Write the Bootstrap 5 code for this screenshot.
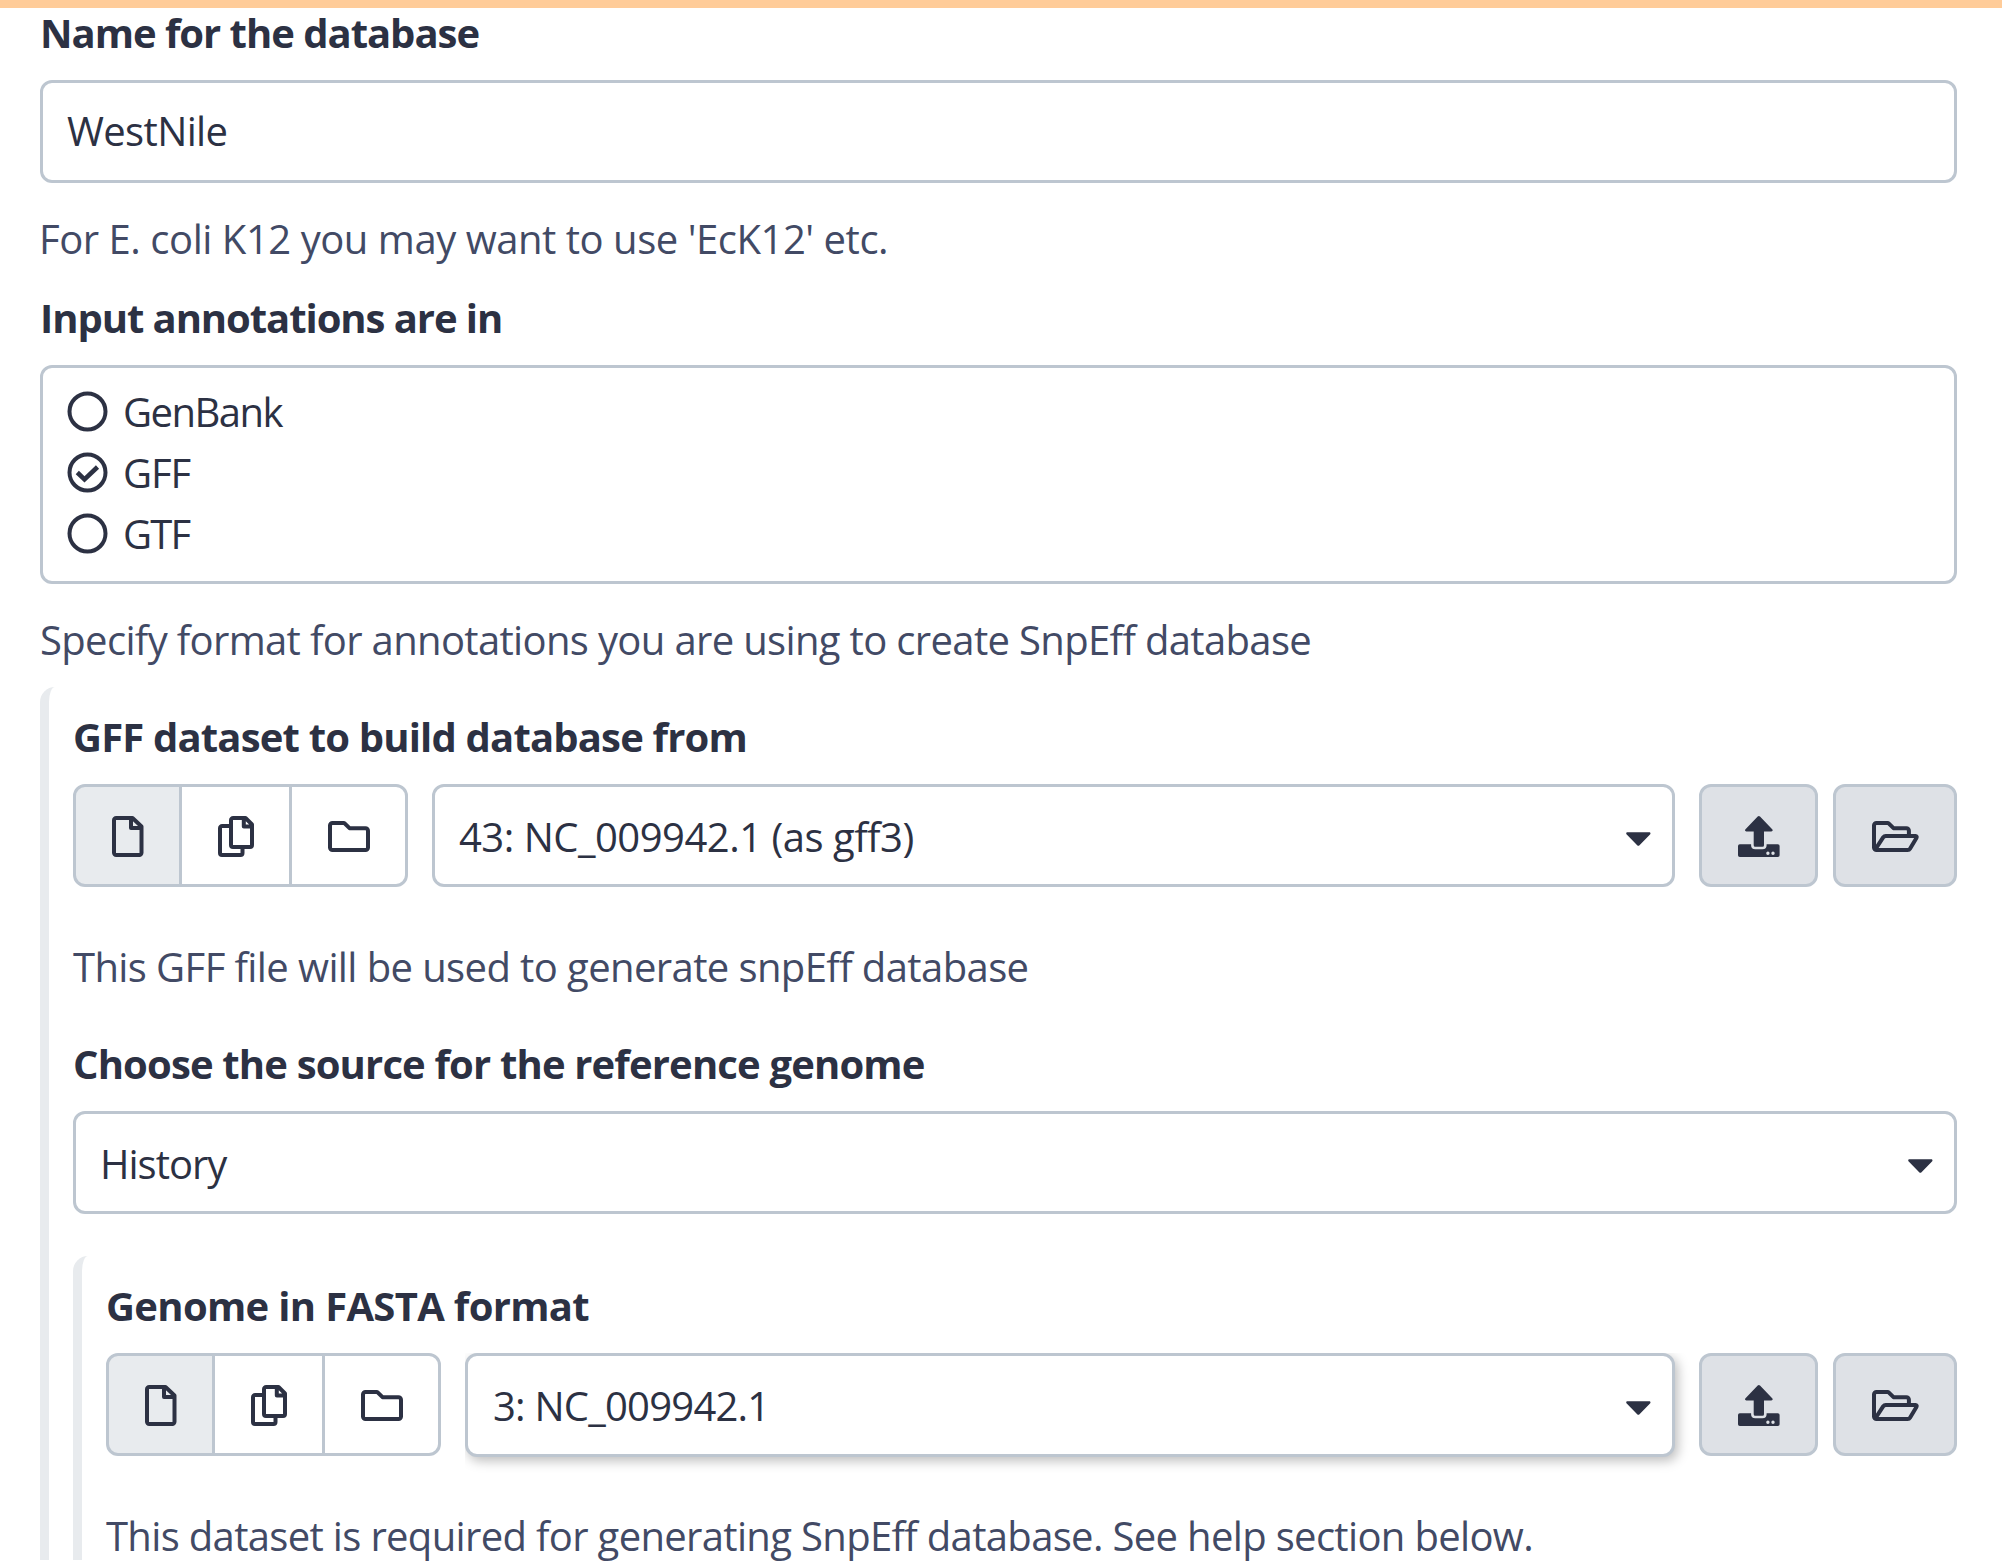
<!DOCTYPE html>
<html lang="en">
<head>
<meta charset="utf-8">
<title>SnpEff build</title>
<link rel="stylesheet" href="https://cdn.jsdelivr.net/npm/bootstrap@5.3.0/dist/css/bootstrap.min.css">
<style>
  body { font-family: "Open Sans", "Noto Sans", sans-serif; font-size: 40px; line-height: 48px; color: #2c3143; background: #fff; height: 1561px; overflow: hidden; }
  .top-strip { height: 8px; background: #ffcc99; }
  .tool-form { padding: 0 45px 0 40px; }
  .field-title { font-weight: 700; height: 48px; padding-top: 1px; white-space: nowrap; margin-bottom: 24px; }
  .field-help { color: #424a65; height: 48px; padding-top: 1px; white-space: nowrap; }
  .box { border: 3px solid #bdc6d0; border-radius: 12px; background: #fff; color: #2c3143; }
  .form-control.box { height: 103px; font-size: 40px; line-height: 48px; padding: 0 24px 3px; }
  .pick { height: 103px; padding: 0 21px 0 24px; white-space: nowrap; }
  .pick svg { margin-top: 7px; }
  .pick span { padding-top: 2px; }
  .pick-raised { height: 104px; padding-left: 25px; box-shadow: 3px 4px 12px rgba(0,0,0,.26); clip-path: inset(0 -23px -26px 0); }
  .pick-raised svg { margin-top: 5px; }
  .radio-box { height: 219px; padding: 13px 24px; }
  .radio-line { height: 61px; gap: 15px; }
  .nest { border-left: 9px solid #e8ebee; border-radius: 15px 0 0 0; padding: 25px 0 0 24px; }
  .data-row { height: 103px; gap: 24px; }
  .kinds .btn { border: 3px solid #bdc6d0; border-radius: 12px; height: 103px; padding: 2px 0 0; line-height: 1; display: flex; align-items: center; justify-content: center; flex: none; color: #2c3143; }
  .kinds .btn + .btn { margin-left: -3px !important; }
  .kinds .btn.active { background: #e8ebee; border-color: #bdc6d0; z-index: 0; }
  .k1 { width: 109px; } .k2 { width: 113px; } .k3 { width: 119px; }
  .tail { gap: 15px; }
  .tail .btn { border: 3px solid #bdc6d0; border-radius: 12px; background: #dee1e6; height: 103px; padding: 2px 0 0; display: flex; align-items: center; justify-content: center; color: #2c3143; }
  .b-up { width: 119px; } .b-open { width: 124px; }
  svg { display: block; flex: none; }
  .ln { fill: none; stroke: #2c3143; stroke-width: 4; stroke-linejoin: round; }
  .tick { stroke-width: 4.6; stroke-linejoin: miter; }
  .fl { fill: #2c3143; }
  .s-name { letter-spacing: -1.02px; } .s-west { letter-spacing: -.64px; }
  .s-ecoli { letter-spacing: -.46px; margin-left: -1px; } .s-input { letter-spacing: -1.06px; }
  .s-gb { letter-spacing: -1.53px; } .s-gff { letter-spacing: -1.15px; } .s-gtf { letter-spacing: -1.75px; }
  .field-help.s-spec { letter-spacing: -.655px; padding-top: 2px; } .s-gset { letter-spacing: -.82px; } .s-43 { letter-spacing: -.5px; }
  .s-tgff { letter-spacing: -.6px; } .s-src { letter-spacing: -.84px; } .s-hist { letter-spacing: -1px; }
  .s-fasta { letter-spacing: -.67px; } .s-3 { letter-spacing: -.77px; } .s-req { letter-spacing: -.665px; }
  .g25 { margin-top: 25px; } .g31 { margin-top: 31px; } .g30 { margin-top: 30px; } .g42 { margin-top: 42px; } .g49 { margin-top: 49px; } .g55 { margin-top: 55px; }
</style>
<script src="https://cdn.jsdelivr.net/npm/bootstrap@5.3.0/dist/js/bootstrap.bundle.min.js"></script>
</head>
<body>
<svg width="0" height="0" class="position-absolute">
  <symbol id="i-file" viewBox="0 0 32 41"><path class="ln" d="M4.200 2H20.500L29.500 10.500V36.800a2.200 2.200 0 0 1-2.200 2.200H4.200A2.200 2.200 0 0 1 2 36.800V4.200A2.200 2.200 0 0 1 4.200 2ZM19 2V12H29.500"/></symbol>
  <symbol id="i-copy" viewBox="0 0 36 41"><path class="ln" d="M15.200 2H27.500L34 8.500V29a2 2 0 0 1-2 2H15a2 2 0 0 1-2-2V4.200A2.200 2.200 0 0 1 15.200 2ZM25.800 2V10.500H34M13 10H4.200A2.200 2.200 0 0 0 2 12.200V37a2 2 0 0 0 2 2H22.500a2 2 0 0 0 2-2V31"/></symbol>
  <symbol id="i-folder" viewBox="0 0 42 31"><path class="ln" d="M4.500 2H15.500a2 2 0 0 1 1.400.600L21.500 7.200H37.500A2.500 2.500 0 0 1 40 9.700V26.500A2.500 2.500 0 0 1 37.500 29H4.500A2.500 2.500 0 0 1 2 26.500V4.500A2.500 2.500 0 0 1 4.500 2Z"/></symbol>
  <symbol id="i-up" viewBox="0 0 42 41"><path class="fl" d="M19.700.600a1.600 1.600 0 0 1 2.300 0L34.200 13.200c.900 1 .400 2.200-.900 2.200H26V29.200a1.500 1.500 0 0 1-1.500 1.500H17.200a1.500 1.500 0 0 1-1.500-1.500V15.400H8.400c-1.300 0-1.800-1.200-.900-2.200Z"/><path class="fl" fill-rule="evenodd" d="M1.800 28.200H13.100V29.200A4.100 4.100 0 0 0 17.200 33.300H24.500A4.100 4.100 0 0 0 28.600 29.200V28.200H39.800A1.800 1.800 0 0 1 41.600 30V39.200A1.800 1.800 0 0 1 39.800 41H1.800A1.800 1.800 0 0 1 0 39.200V30A1.800 1.800 0 0 1 1.800 28.200ZM28.200 37.300a1.700 1.700 0 1 0 3.400 0a1.700 1.700 0 1 0-3.400 0ZM33.300 37.300a1.700 1.700 0 1 0 3.400 0a1.700 1.700 0 1 0-3.400 0Z"/></symbol>
  <symbol id="i-open" viewBox="0 0 47 31"><path class="ln" d="M3.500 28.200L11.300 16.200Q12.200 15 13.700 15H43.300Q45.400 15.200 44.300 17.200L38 27.700Q37.200 29 35.700 29H4.500A2.500 2.500 0 0 1 2 26.500V4.500A2.500 2.500 0 0 1 4.500 2H15.500a2 2 0 0 1 1.400.600L21.500 7.200H34.400A2.500 2.500 0 0 1 36.900 9.700V15"/></symbol>
  <symbol id="i-caret" viewBox="0 0 25 14"><path class="fl" d="M1.500.3H23.200c1.300 0 1.700 1.300.8 2.200L13.500 13.200a1.600 1.600 0 0 1-2.300 0L.700 2.500C-.200 1.600.200.3 1.500.3Z"/></symbol>
  <symbol id="i-ring" viewBox="0 0 41 41"><circle class="ln" cx="20.500" cy="20.500" r="18"/></symbol>
</svg>

<div class="top-strip"></div>
<main class="tool-form">
  <div class="field-title s-name">Name for the database</div>
  <input type="text" class="form-control box s-west" value="WestNile">
  <div class="field-help g31 s-ecoli">For E. coli K12 you may want to use 'EcK12' etc.</div>

  <div class="field-title g31 s-input">Input annotations are in</div>
  <div class="box radio-box">
    <div class="radio-line d-flex align-items-center"><svg width="41" height="41"><use href="#i-ring"/></svg><span class="s-gb">GenBank</span></div>
    <div class="radio-line d-flex align-items-center"><svg width="41" height="41"><use href="#i-ring"/><path class="ln tick" d="M10.300 20.500L17.500 27.300L30.500 15"/></svg><span class="s-gff">GFF</span></div>
    <div class="radio-line d-flex align-items-center"><svg width="41" height="41"><use href="#i-ring"/></svg><span class="s-gtf">GTF</span></div>
  </div>
  <div class="field-help g30 s-spec">Specify format for annotations you are using to create SnpEff database</div>

  <section class="nest g25">
    <div class="field-title s-gset">GFF dataset to build database from</div>
    <div class="data-row d-flex align-items-start">
      <div class="btn-group kinds">
        <button class="btn active k1"><svg width="32" height="41"><use href="#i-file"/></svg></button>
        <button class="btn k2"><svg width="36" height="41"><use href="#i-copy"/></svg></button>
        <button class="btn k3"><svg width="42" height="31"><use href="#i-folder"/></svg></button>
      </div>
      <div class="box pick flex-grow-1 d-flex align-items-center justify-content-between"><span class="s-43">43: NC_009942.1 (as gff3)</span><svg width="25" height="14"><use href="#i-caret"/></svg></div>
      <div class="tail d-flex">
        <button class="btn b-up"><svg width="42" height="41"><use href="#i-up"/></svg></button>
        <button class="btn b-open"><svg width="47" height="31"><use href="#i-open"/></svg></button>
      </div>
    </div>
    <div class="field-help g55 s-tgff">This GFF file will be used to generate snpEff database</div>

    <div class="field-title g49 s-src">Choose the source for the reference genome</div>
    <div class="box pick d-flex align-items-center justify-content-between"><span class="s-hist">History</span><svg width="25" height="14"><use href="#i-caret"/></svg></div>

    <section class="nest g42">
      <div class="field-title s-fasta">Genome in FASTA format</div>
      <div class="data-row d-flex align-items-start">
        <div class="btn-group kinds">
          <button class="btn active k1"><svg width="32" height="41"><use href="#i-file"/></svg></button>
          <button class="btn k2"><svg width="36" height="41"><use href="#i-copy"/></svg></button>
          <button class="btn k3"><svg width="42" height="31"><use href="#i-folder"/></svg></button>
        </div>
        <div class="box pick pick-raised flex-grow-1 d-flex align-items-center justify-content-between"><span class="s-3">3: NC_009942.1</span><svg width="25" height="14"><use href="#i-caret"/></svg></div>
        <div class="tail d-flex">
          <button class="btn b-up"><svg width="42" height="41"><use href="#i-up"/></svg></button>
          <button class="btn b-open"><svg width="47" height="31"><use href="#i-open"/></svg></button>
        </div>
      </div>
      <div class="field-help g55 s-req pb-5">This dataset is required for generating SnpEff database. See help section below.</div>
    </section>
  </section>
</main>
</body>
</html>
